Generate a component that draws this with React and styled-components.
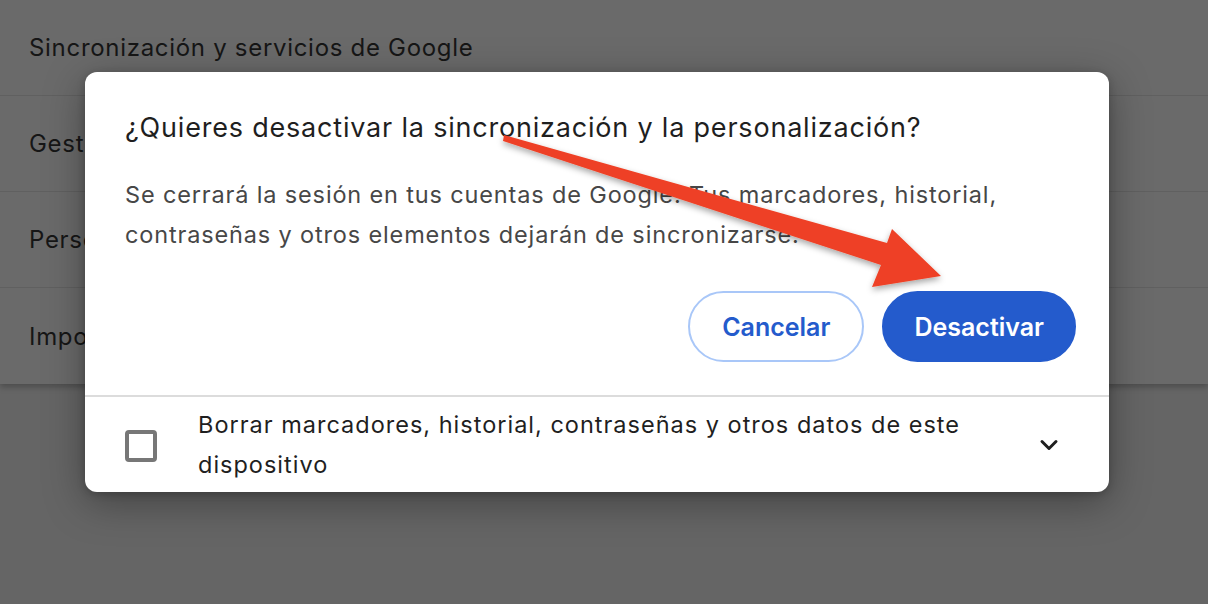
import React from "react";
import styled, { createGlobalStyle } from "styled-components";

const GlobalStyle = createGlobalStyle`
  html, body {
    margin: 0;
    padding: 0;
    background: #656565;
  }
  body {
    font-family: Inter, "Noto Sans", "Liberation Sans", sans-serif;
  }
`;

const settingsRows = [
  "Sincronización y servicios de Google",
  "Gestionar tu cuenta de Google",
  "Personalizar tu perfil de Chrome",
  "Importar marcadores y ajustes",
];

const App = () => {
  return (
    <>
      <GlobalStyle />
      <Page>
        <SettingsCard>
          {settingsRows.map((row, i) => (
            <SettingsRow key={row} last={i === settingsRows.length - 1}>
              {row}
            </SettingsRow>
          ))}
        </SettingsCard>

        <Overlay>
          <Dialog>
            <DialogBody>
              <Title>
                ¿Quieres desactivar la sincronización y la personalización?
              </Title>
              <Description>
                Se cerrará la sesión en tus cuentas de Google. Tus marcadores,
                historial, contraseñas y otros elementos dejarán de
                sincronizarse.
              </Description>
              <Actions>
                <PillButton>Cancelar</PillButton>
                <PillButton primary>Desactivar</PillButton>
              </Actions>
            </DialogBody>
            <OptionRow>
              <Checkbox />
              <OptionText>
                Borrar marcadores, historial, contraseñas y otros datos de este
                dispositivo
              </OptionText>
              <Chevron viewBox="0 0 24 24">
                <path
                  d="M5 8.5l7 7 7-7"
                  fill="none"
                  stroke="#1f1f1f"
                  strokeWidth="3"
                  strokeLinecap="round"
                  strokeLinejoin="round"
                />
              </Chevron>
            </OptionRow>
          </Dialog>

          <Arrow viewBox="0 0 1208 604">
            <defs>
              <filter id="arrowShadow" x="-10%" y="-10%" width="120%" height="130%">
                <feDropShadow dx="0" dy="3" stdDeviation="3" floodColor="#000" floodOpacity="0.35" />
              </filter>
            </defs>
            <polygon
              points="504,135 887,243 892,229 941,276 872,287 881,265 503,141"
              fill="#ee4125"
              filter="url(#arrowShadow)"
            />
          </Arrow>
        </Overlay>
      </Page>
    </>
  );
};

const Page = styled.div`
  position: relative;
  width: 1208px;
  height: 604px;
  overflow: hidden;
  background: #656565;
`;

const SettingsCard = styled.div`
  background: #6a6a6a;
  box-shadow: 0 3px 6px rgba(0, 0, 0, 0.25);
  display: flex;
  flex-direction: column;
`;

const SettingsRow = styled.div`
  height: 96px;
  display: flex;
  align-items: center;
  padding: 0 29px;
  box-sizing: border-box;
  font-size: 24px;
  letter-spacing: 0.7px;
  color: #161616;
  border-bottom: ${(p) => (p.last ? "none" : "1px solid #606060")};
`;

const Overlay = styled.div`
  position: absolute;
  inset: 0;
  padding: 72px 0 0 85px;
  box-sizing: border-box;
`;

const Dialog = styled.div`
  width: 1024px;
  height: 420px;
  background: #ffffff;
  border-radius: 12px;
  overflow: hidden;
  box-shadow: 0 10px 40px rgba(0, 0, 0, 0.35), 0 2px 8px rgba(0, 0, 0, 0.2);
  display: flex;
  flex-direction: column;
`;

const DialogBody = styled.div`
  padding: 40px 33px 33px 40px;
  display: flex;
  flex-direction: column;
  border-bottom: 2px solid #dcdcdc;
`;

const Title = styled.h2`
  margin: 0;
  font-size: 27px;
  line-height: 32px;
  font-weight: 400;
  letter-spacing: 0.8px;
  color: #1f1f1f;
`;

const Description = styled.p`
  margin: 31px 0 0;
  max-width: 900px;
  font-size: 23.5px;
  line-height: 40px;
  letter-spacing: 0.85px;
  color: #474747;
`;

const Actions = styled.div`
  margin-top: 36px;
  display: flex;
  justify-content: flex-end;
  gap: 18px;
`;

const PillButton = styled.button`
  height: 71px;
  padding: 0 ${(p) => (p.primary ? "30px" : "32px")};
  border-radius: 36px;
  font-family: inherit;
  font-size: 25px;
  font-weight: 600;
  cursor: pointer;
  border: 2px solid ${(p) => (p.primary ? "#245bcc" : "#a9c7f8")};
  background: ${(p) => (p.primary ? "#245bcc" : "#ffffff")};
  color: ${(p) => (p.primary ? "#ffffff" : "#245bcc")};
`;

const OptionRow = styled.div`
  flex: 1;
  display: flex;
  align-items: center;
  padding: 0 48px 0 40px;
`;

const Checkbox = styled.span`
  width: 32px;
  height: 32px;
  box-sizing: border-box;
  border: 4px solid #777777;
  border-radius: 4px;
  flex-shrink: 0;
  margin-top: 2px;
`;

const OptionText = styled.div`
  flex: 1;
  margin-left: 41px;
  max-width: 800px;
  margin-right: auto;
  font-size: 23.5px;
  line-height: 40px;
  letter-spacing: 1px;
  color: #1f1f1f;
`;

const Chevron = styled.svg`
  width: 24px;
  height: 24px;
  flex-shrink: 0;
`;

const Arrow = styled.svg`
  position: absolute;
  inset: 0;
  width: 1208px;
  height: 604px;
  pointer-events: none;
`;

export default App;
